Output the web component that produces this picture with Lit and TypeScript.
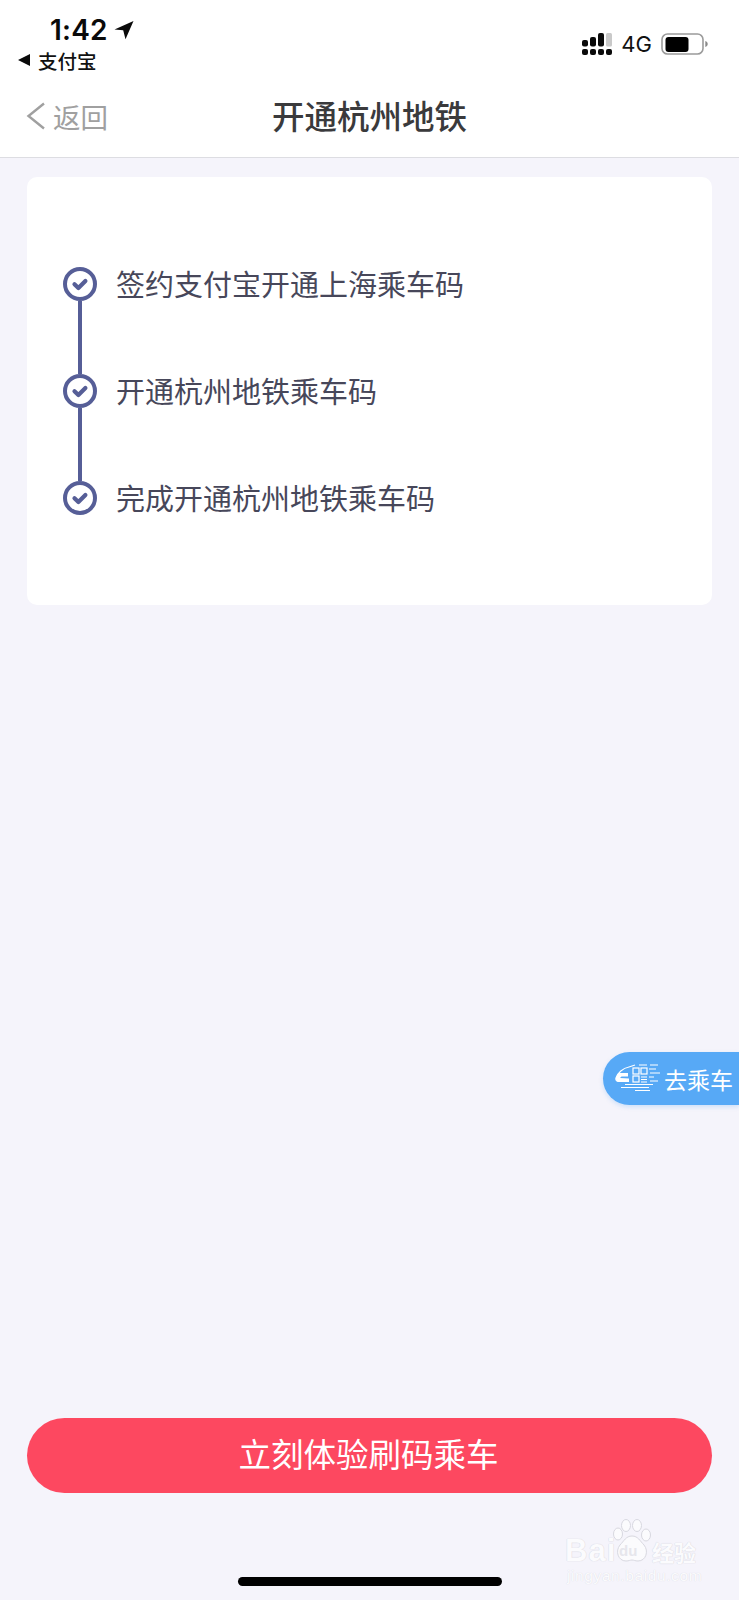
import { LitElement, html, css, svg } from "lit";
import { customElement } from "lit/decorators.js";

const STEPS = ["签约支付宝开通上海乘车码", "开通杭州地铁乘车码", "完成开通杭州地铁乘车码"];

const check = svg`<svg class="check" viewBox="0 0 34 34" width="34" height="34">
  <circle cx="17" cy="17" r="15" fill="none" stroke="#565e97" stroke-width="4"/>
  <path d="M11.500 17.200l3.900 3.800 7-7" fill="none" stroke="#565e97" stroke-width="4.200" stroke-linecap="round" stroke-linejoin="round"/>
</svg>`;

@customElement("app-root")
export class AppRoot extends LitElement {
  static styles = css`
    :host { display: block; width: 739px; height: 1600px; }
    .page {
      position: relative; width: 739px; height: 1600px; overflow: hidden;
      display: flex; flex-direction: column; background: #f5f4fb;
      font-family: "Noto Sans CJK SC", "Liberation Sans", sans-serif;
    }
    header { height: 158px; box-sizing: border-box; background: #fff; border-bottom: 1px solid #dddde2; display: flex; flex-direction: column; }
    .status { height: 80px; box-sizing: border-box; display: flex; justify-content: space-between; }
    .status-left { padding: 14px 0 0 17px; display: flex; flex-direction: column; }
    .time-row { display: flex; align-items: center; gap: 6px; padding-left: 33px; height: 32px; }
    .time { font: 600 28px/32px "Inter", "Liberation Sans", sans-serif; color: #0a0a0a; letter-spacing: 0.2px; }
    .app-row { display: flex; align-items: center; gap: 7px; height: 28px; font-size: 19.500px; font-weight: 500; color: #111; }
    .status-right { display: flex; align-items: flex-start; padding: 32px 0 0 0; margin-right: 31px; }
    .net { font: 400 22px/26px "Inter", "Liberation Sans", sans-serif; color: #111; margin: -1px 9px 0 8px; }
    .batt { margin-top: 1px; }
    .nav { flex: 1; display: flex; align-items: center; position: relative; padding-left: 26px; padding-bottom: 5px; }
    .back { display: flex; align-items: center; gap: 8px; color: #a0a0a0; font-size: 27.500px; line-height: 40px; }
    .title { position: absolute; left: 0; right: 0; top: 12px; text-align: center; font-size: 32.500px; line-height: 46px; font-weight: 500; color: #3a3a3c; }
    .card {
      margin: 19px 27px 0; height: 428px; box-sizing: border-box; background: #fff; border-radius: 10px;
      padding: 90px 36px 0 36px; display: flex; flex-direction: column;
    }
    .step { display: flex; align-items: flex-start; gap: 19px; height: 107px; }
    .step-mark { width: 34px; display: flex; flex-direction: column; align-items: center; flex: none; }
    .check { display: block; flex: none; }
    .link { width: 4px; height: 73px; background: #565e97; }
    .label { font-size: 29px; line-height: 34px; color: #47475a; margin-top: -1px; white-space: nowrap; }
    .cta {
      margin: auto 27px 0; height: 75px; border: 0; padding: 0 2px 5px 0; border-radius: 38px; background: #fd4860; color: #fff;
      display: flex; align-items: center; justify-content: center; font-family: inherit; font-size: 32.500px; line-height: 40px;
    }
    .foot { height: 107px; display: flex; justify-content: center; align-items: flex-start; padding-top: 84px; box-sizing: border-box; }
    .home { width: 264px; height: 9px; border-radius: 5px; background: #000; }
    .float {
      position: absolute; left: 603px; top: 1052px; width: 136px; height: 53px; box-sizing: border-box;
      border-radius: 27px 0 0 27px; background: #57a9f6; color: #fff; box-shadow: 0 2px 4px rgba(87,169,246,.25);
      display: flex; align-items: center; padding-left: 12px; gap: 3px; font-size: 23px;
    }
    .mark { position: absolute; left: 565px; top: 1529px; width: 140px; }
    .mark-top { display: flex; align-items: center; height: 44px; position: relative; }
    .bai { font: 700 31px/36px "Liberation Sans", sans-serif; letter-spacing: 1px; color: #fbfbfd; text-shadow: 0 0 1px #d8d8e0, 0 0 1px #d8d8e0; }
    .paw { position: absolute; left: 47px; top: -10px; }
    .du { position: absolute; left: 54px; top: 13px; font: 700 15px/18px "Liberation Sans", sans-serif; color: #e6e6ec; }
    .jy { position: absolute; left: 87px; top: 9px; font-size: 22px; line-height: 26px; font-weight: 700; color: #fbfbfd; text-shadow: 0 0 1px #d8d8e0, 0 0 1px #d8d8e0; white-space: nowrap; }
    .url { font: 400 15.500px/20px "Liberation Sans", sans-serif; color: #fbfbfd; text-shadow: 0 0 1px #d4d4dc; white-space: nowrap; margin: -7px 0 0 2px; letter-spacing: .6px; }
  `;

  render() {
    return html`<div class="page">
      <header>
        <div class="status">
          <div class="status-left">
            <div class="time-row">
              <span class="time">1:42</span>
              <svg width="20" height="20" viewBox="0 0 20 20"><path d="M19.500 1L.5 9.500l8.700.8 2.300 9z" fill="#0a0a0a"/></svg>
            </div>
            <div class="app-row">
              <svg width="14" height="14" viewBox="0 0 14 14"><path d="M13 1v12L1 7z" fill="#0a0a0a"/></svg>
              <span>支付宝</span>
            </div>
          </div>
          <div class="status-right">
            <svg width="31" height="24" viewBox="0 0 31 24">
              <g fill="#0a0a0a">
                <rect x="0" y="17" width="6" height="6" rx="2"/><rect x="8" y="17" width="6" height="6" rx="2"/><rect x="16" y="17" width="6" height="6" rx="2"/><rect x="24" y="17" width="6" height="6" rx="2"/>
                <rect x="0" y="8" width="6" height="6.500" rx="2"/><rect x="8" y="5" width="6" height="9.500" rx="2"/><rect x="16" y="1" width="6" height="13.500" rx="2"/>
              </g>
              <rect x="24" y="1" width="6" height="13.500" rx="1.500" fill="#c9c9c9"/>
            </svg>
            <span class="net">4G</span>
            <svg class="batt" width="47" height="23" viewBox="0 0 47 23">
              <rect x="1" y="1" width="41" height="20" rx="5.500" fill="none" stroke="#9b9b9b" stroke-width="1.600"/>
              <rect x="4.500" y="4" width="23" height="15" rx="3" fill="#000"/>
              <path d="M44.300 8c1.600.5 2.400 1.600 2.400 3s-.8 2.500-2.400 3z" fill="#8a8a8a"/>
            </svg>
          </div>
        </div>
        <div class="nav">
          <div class="back">
            <svg width="19" height="28" viewBox="0 0 19 28"><path d="M18 1.500L2.500 14 18 26.500" fill="none" stroke="#a0a0a0" stroke-width="2.400"/></svg>
            <span>返回</span>
          </div>
          <div class="title">开通杭州地铁</div>
        </div>
      </header>

      <section class="card">
        ${STEPS.map((s, i) => html`<div class="step">
          <div class="step-mark">${check}${i < STEPS.length - 1 ? html`<div class="link"></div>` : ""}</div>
          <div class="label">${s}</div>
        </div>`)}
      </section>

      <button class="cta">立刻体验刷码乘车</button>
      <div class="foot"><div class="home"></div></div>

      <div class="float">
        <svg width="46" height="29" viewBox="0 0 46 29" fill="none" stroke="#fff" stroke-width="1.200">
          <path d="M14 3C8 4 2.500 9 1 14c-.5 2 .6 3.500 2.500 3.500H14" />
          <path d="M1 13.500c.5-1.500 1.500-3 3-4.500h9v3.500H6.500L5 14l9 .5v3H3.500C1.500 17.500.5 15.500 1 13.500z" fill="#fff" stroke="none"/>
          <path d="M14 3l6-2"/>
          <rect x="18" y="4" width="6" height="6"/><rect x="26" y="4" width="6" height="6"/><rect x="18" y="12" width="6" height="6"/>
          <path d="M26 13h6M26 15.500h6M26 18h6M34 5h7M35 9h10M34 13h5M35 17h8M10 20.500h28M6 23.500h28M20 26.500h15M24 1h8M35 1h8"/>
        </svg>
        <span>去乘车</span>
      </div>

      <div class="mark">
        <div class="mark-top">
          <span class="bai">Bai</span>
          <svg class="paw" width="40" height="44" viewBox="0 0 40 44">
            <g fill="#fbfbfd" stroke="#d8d8e0" stroke-width="1">
              <ellipse cx="6" cy="15" rx="4.500" ry="6"/><ellipse cx="14" cy="6.500" rx="4.500" ry="6"/><ellipse cx="25" cy="6.500" rx="4.500" ry="6"/><ellipse cx="34" cy="16" rx="4.500" ry="6"/>
              <path d="M20 17c6 0 8 5 12 9 5 6 2 16-6 16-3 0-4-1-6-1s-3 1-6 1c-8 0-11-10-6-16 4-4 6-9 12-9z"/>
            </g>
          </svg>
          <span class="du">du</span>
          <span class="jy">经验</span>
        </div>
        <div class="url">jingyan.baidu.com</div>
      </div>
    </div>`;
  }
}
